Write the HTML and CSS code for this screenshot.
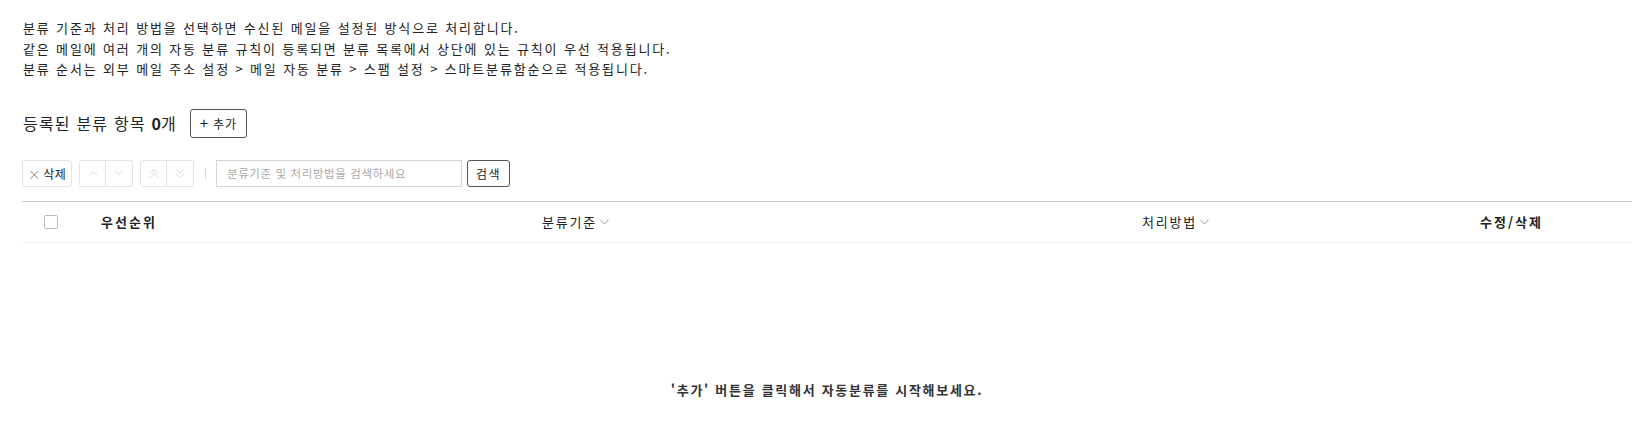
FILE: index.html
```html
<!DOCTYPE html>
<html lang="ko">
<head>
<meta charset="utf-8">
<title>메일 자동 분류</title>
<link rel="stylesheet" href="styles.css">
</head>
<body>
<div class="page">
  <div class="desc">
    <p>분류 기준과 처리 방법을 선택하면 수신된 메일을 설정된 방식으로 처리합니다.</p>
    <p>같은 메일에 여러 개의 자동 분류 규칙이 등록되면 분류 목록에서 상단에 있는 규칙이 우선 적용됩니다.</p>
    <p>분류 순서는 외부 메일 주소 설정 &gt; 메일 자동 분류 &gt; 스팸 설정 &gt; 스마트분류함순으로 적용됩니다.</p>
  </div>

  <div class="heading">
    <h2 class="title">등록된 분류 항목 <strong>0</strong>개</h2>
    <button class="btn btn-add"><span class="plus">+</span>추가</button>
  </div>

  <div class="toolbar">
    <button class="tbtn btn-del"><span class="x">×</span>삭제</button>
    <div class="group">
      <button class="tbtn icon" aria-label="위로">
        <svg width="10" height="6" viewBox="0 0 10 6"><path d="M1 5.5 5 1.5 9 5.5" fill="none" stroke="#d4d4d4" stroke-width="1"/></svg>
      </button>
      <button class="tbtn icon" aria-label="아래로">
        <svg width="10" height="6" viewBox="0 0 10 6"><path d="M1 0.5 5 4.5 9 0.5" fill="none" stroke="#d4d4d4" stroke-width="1"/></svg>
      </button>
    </div>
    <div class="group">
      <button class="tbtn icon" aria-label="맨 위로">
        <svg width="10" height="9" viewBox="0 0 10 9"><path d="M1 4.5 5 0.5 9 4.5M1 8.5 5 4.5 9 8.5" fill="none" stroke="#d4d4d4" stroke-width="1"/></svg>
      </button>
      <button class="tbtn icon" aria-label="맨 아래로">
        <svg width="10" height="9" viewBox="0 0 10 9"><path d="M1 0.5 5 4.5 9 0.5M1 4.5 5 8.5 9 4.5" fill="none" stroke="#d4d4d4" stroke-width="1"/></svg>
      </button>
    </div>
    <span class="sep"></span>
    <input class="search" type="text" placeholder="분류기준 및 처리방법을 검색하세요">
    <button class="btn btn-search">검색</button>
  </div>

  <div class="table">
    <div class="thead">
      <div class="col c-check"><span class="checkbox"></span></div>
      <div class="col c-prio">우선순위</div>
      <div class="col c-rule">분류기준<svg class="chev" width="9" height="6" viewBox="0 0 9 6"><path d="M0.5 1 4.5 5 8.5 1" fill="none" stroke="#999" stroke-width="1"/></svg></div>
      <div class="col c-act">처리방법<svg class="chev" width="9" height="6" viewBox="0 0 9 6"><path d="M0.5 1 4.5 5 8.5 1" fill="none" stroke="#999" stroke-width="1"/></svg></div>
      <div class="col c-edit">수정/삭제</div>
    </div>
    <div class="empty">'추가' 버튼을 클릭해서 자동분류를 시작해보세요.</div>
  </div>
</div>
</body>
</html>
```

FILE: styles.css
```css
* { box-sizing: border-box; }
html, body { margin: 0; padding: 0; background: #fff; }
body {
  font-family: "Noto Sans CJK KR", "Noto Sans", sans-serif;
  color: #222;
}
.page {
  padding: 18px 9px 0 22px;
}
.desc p {
  margin: 0;
  font-size: 13px;
  line-height: 20.5px;
  letter-spacing: 1.85px;
  color: #222;
  padding-left: 1px;
}
.heading {
  display: flex;
  align-items: center;
  margin-top: 29px;
  gap: 13px;
}
.title {
  margin: 0;
  font-size: 16px;
  font-weight: 400;
  letter-spacing: 1.2px;
  color: #222;
  padding-left: 1px;
  line-height: 20px;
}
.title strong { font-weight: 700; letter-spacing: 0; }
.btn {
  font-family: inherit;
  background: #fff;
  border: 1px solid #555;
  border-radius: 3px;
  color: #222;
  cursor: pointer;
  padding: 0;
}
.btn-add {
  width: 57px;
  height: 29px;
  font-size: 12px;
  letter-spacing: 1px;
  display: inline-flex;
  align-items: center;
  justify-content: center;
  gap: 5px;
}
.btn-add .plus { font-size: 15px; line-height: 1; margin-top: -1px; letter-spacing: 0; }

.toolbar {
  display: flex;
  align-items: center;
  margin-top: 22px;
  height: 27px;
}
.tbtn {
  font-family: inherit;
  background: #fff;
  border: 1px solid #e4e4e4;
  border-radius: 3px;
  height: 27px;
  padding: 0;
  cursor: pointer;
}
.btn-del {
  width: 50px;
  font-size: 12px;
  letter-spacing: 0.5px;
  color: #222;
  display: inline-flex;
  align-items: center;
  justify-content: center;
  gap: 2px;
}
.btn-del .x { color: #999; font-size: 13px; line-height: 1; }
.group {
  display: flex;
  margin-left: 7px;
}
.group .tbtn {
  width: 27px;
  display: inline-flex;
  align-items: center;
  justify-content: center;
}
.group .tbtn:first-child { border-radius: 3px 0 0 3px; }
.group .tbtn:last-child { border-radius: 0 3px 3px 0; border-left: 0; }
.sep {
  width: 1px;
  height: 11px;
  background: #d8d8d8;
  margin: 0 10px 0 11px;
}
.search {
  width: 246px;
  height: 27px;
  border: 1px solid #d4d4d4;
  border-radius: 0;
  padding: 0 10px;
  font-family: inherit;
  font-size: 11.5px;
  letter-spacing: 0.6px;
  color: #222;
  outline: none;
}
.search::placeholder { color: #aaa; }
.btn-search {
  margin-left: 5px;
  width: 43px;
  height: 27px;
  font-size: 12px;
  letter-spacing: 1.5px;
}

.table {
  margin-top: 14px;
}
.thead {
  display: grid;
  grid-template-columns: 79px 441px 600px 338px 1fr;
  align-items: center;
  height: 42px;
  border-top: 1px solid #ccc;
  border-bottom: 1px solid #eee;
  font-size: 13px;
  font-weight: 700;
  letter-spacing: 2px;
  color: #222;
}
.col { display: flex; align-items: center; }
.c-check { padding-left: 22px; }
.checkbox {
  width: 14px;
  height: 14px;
  border: 1px solid #bbb;
  border-radius: 2px;
  display: block;
}
.c-rule, .c-act { font-weight: 400; color: #222; letter-spacing: 1.8px; }
.chev { margin-left: 3px; margin-top: 1px; }
.empty {
  text-align: center;
  font-size: 13px;
  font-weight: 700;
  letter-spacing: 1.7px;
  color: #333;
  margin-top: 137px;
  line-height: 20px;
}
```
